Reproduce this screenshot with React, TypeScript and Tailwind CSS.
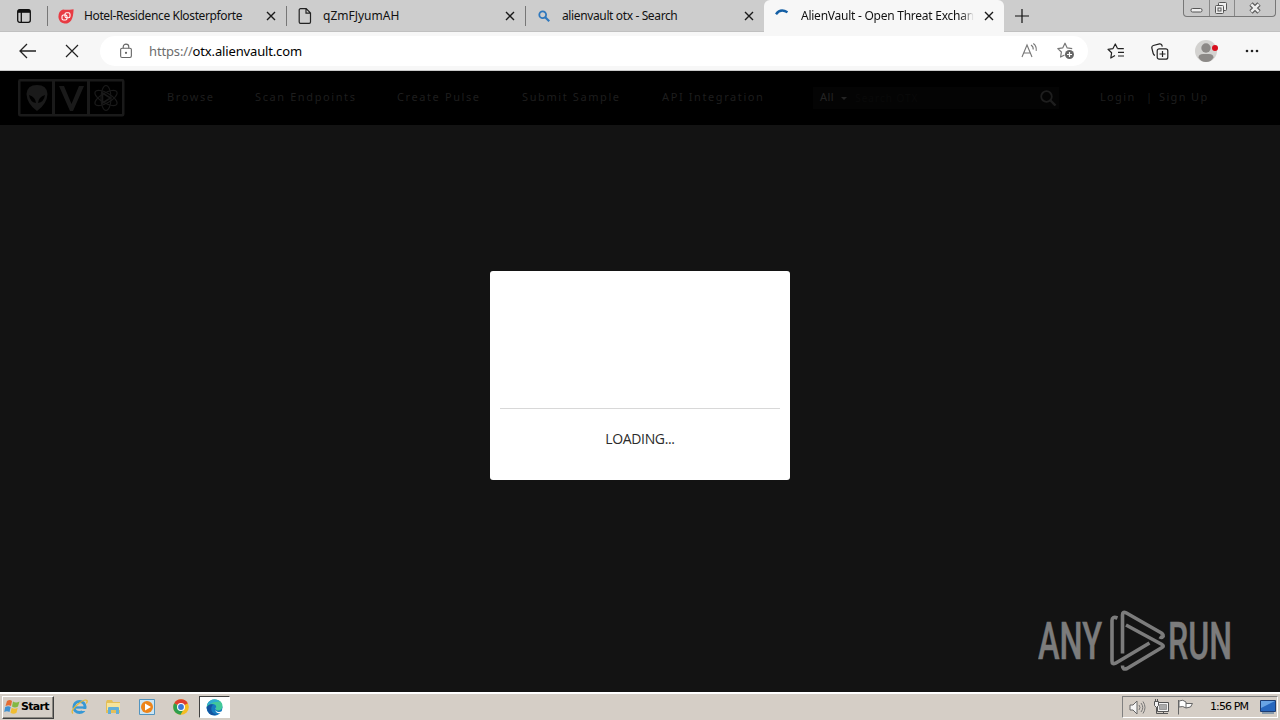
import type { ReactNode } from 'react'

const UI = "font-['Noto_Sans','Open_Sans',sans-serif]"
const CLASSIC = "font-['DejaVu_Sans',sans-serif]"

function TabClose() {
  return (
    <svg className="shrink-0" width="10" height="10" viewBox="0 0 10 10" stroke="#1a1a1a" strokeWidth="1.4">
      <path d="M1 1l8 8M9 1L1 9" />
    </svg>
  )
}

function Tab({ icon, title, className }: { icon: ReactNode; title: ReactNode; className: string }) {
  return (
    <div className={`flex h-8 shrink-0 items-center pr-[10px] pl-[10px] ${className}`}>
      <div className="flex w-4 shrink-0 justify-center">{icon}</div>
      {title}
      <TabClose />
    </div>
  )
}

function PageIcon() {
  return (
    <svg width="14" height="16" viewBox="0 0 14 16" fill="none" stroke="#222" strokeWidth="1.2">
      <path d="M2.5.7h5.700L12.500 5v9a1.300 1.300 0 0 1-1.300 1.300H2.500A1.300 1.300 0 0 1 1.200 14V2A1.300 1.300 0 0 1 2.500.7zM8 1v4.200h4.300" />
    </svg>
  )
}

function WindowButtons() {
  return (
    <div className="ml-auto mr-[4px] flex h-[17px] w-[93px] self-start rounded-b-[4px] border border-t-0 border-[#777] bg-[#c8c8c8]">
      <svg width="91" height="16" viewBox="0 0 91 16" fill="none" stroke="#555">
        <path d="M25.500 0v16M50.500 0v16" stroke="#888" />
        <rect x="7" y="8.500" width="11" height="3.500" rx="1.500" fill="#eee" />
        <rect x="34.500" y="2.500" width="8" height="8" rx="1" fill="#eee" />
        <rect x="31.500" y="5.500" width="8" height="8" rx="1" fill="#eee" />
        <rect x="34" y="8" width="3" height="3" />
        <path d="M67 4l8 8M75 4l-8 8" stroke="#555" strokeWidth="4.600" />
        <path d="M67.300 4.300l7.400 7.400M74.700 4.300l-7.400 7.400" stroke="#eee" strokeWidth="2.600" />
      </svg>
    </div>
  )
}

function TabStrip() {
  const text = `${UI} overflow-hidden whitespace-nowrap text-[12px] leading-4 text-[#111] flex-1`
  return (
    <div className="flex h-8 bg-[#cdcdcd] shadow-[inset_0_-1px_0_#c0c0c0]">
      <div className="flex w-[47px] items-center pl-[17px]">
        <svg width="14" height="14" viewBox="0 0 14 14" fill="none" stroke="#111" strokeWidth="1.300">
          <rect x=".7" y=".7" width="12.600" height="12.600" rx="2" />
          <path d="M1 2.300h12" strokeWidth="3" />
          <path d="M4.300 3v10" />
        </svg>
      </div>
      <div className="h-[20px] w-px self-center bg-[#777]" />
      <Tab
        className="w-[238px]"
        icon={
          <svg width="16" height="15" viewBox="0 0 16 15">
            <path d="M5 .6Q9 1.300 15.600.2 15.300 8 13.300 11.200 10.500 15 6.500 14.500.8 13.500.4 8 .4 2 5 .6z" fill="#e83b43" />
            <g fill="none" stroke="#fff" strokeWidth="1.100">
              <rect x="4" y="6" width="5" height="5" rx="1.500" />
              <rect x="7" y="3.800" width="5" height="5" rx="1.500" />
            </g>
          </svg>
        }
        title={<span className={`${text} ml-[10px] tracking-[-0.37px]`}>Hotel-Residence Klosterpforte</span>}
      />
      <div className="h-[20px] w-px self-center bg-[#777]" />
      <Tab className="w-[238px]" icon={<PageIcon />} title={<span className={`${text} ml-[10px] tracking-[0px]`}>qZmFJyumAH</span>} />
      <div className="h-[20px] w-px self-center bg-[#777]" />
      <Tab
        className="w-[238px]"
        icon={
          <svg width="12" height="12" viewBox="0 0 12 12" fill="none" stroke="#2f78bd" strokeWidth="1.800">
            <circle cx="4.700" cy="4.700" r="3.400" />
            <path d="M7.200 7.200l4 4" strokeWidth="2.200" />
          </svg>
        }
        title={<span className={`${text} ml-[10px] tracking-[-0.37px]`}>alienvault otx - Search</span>}
      />
      <Tab
        className="w-[240px] rounded-t-[6px] bg-[#f7f7f7]"
        icon={
          <svg width="14" height="14" viewBox="0 0 14 14" fill="none" stroke="#145fa5" strokeWidth="2.400">
            <path d="M1 5.200Q5.500-1 12.500 3.300" />
          </svg>
        }
        title={
          <span className={`${text} ml-[11px] mr-[10px] bg-linear-to-r from-[#111] from-92% to-[#f7f7f7] bg-clip-text tracking-[-0.25px] text-transparent`}>
            AlienVault - Open Threat Exchange
          </span>
        }
      />
      <div className="ml-[11px] flex items-center">
        <svg width="14" height="14" viewBox="0 0 14 14" stroke="#111" strokeWidth="1.200">
          <path d="M7 0v14M0 7h14" />
        </svg>
      </div>
      <WindowButtons />
    </div>
  )
}

function Toolbar() {
  return (
    <div className="flex h-[39px] items-center border-b border-[#c9c9c9] bg-[#f7f7f7]">
      <svg className="ml-[19px]" width="18" height="16" viewBox="0 0 18 16" fill="none" stroke="#222" strokeWidth="1.300">
        <path d="M8 1L1 8l7 7M1 8h16" />
      </svg>
      <svg className="ml-[28px]" width="14" height="14" viewBox="0 0 14 14" stroke="#222" strokeWidth="1.200">
        <path d="M1 1l12 12M13 1L1 13" />
      </svg>
      <div className="ml-[21px] flex h-[30px] w-[988px] items-center rounded-full bg-white">
        <svg className="ml-[20px]" width="12" height="16" viewBox="0 0 13 16" fill="none" stroke="#666" strokeWidth="1.200">
          <rect x=".7" y="5" width="11.600" height="10" rx="1.500" />
          <path d="M3.500 5V3.500a3 3 0 0 1 6 0V5" />
          <circle cx="6.500" cy="10" r=".6" fill="#666" />
        </svg>
        <span className={`${UI} mt-px ml-[17px] text-[13px] tracking-[-0.15px] whitespace-nowrap text-black`}>
          <span className="text-[#6d6d6d]">https://</span>otx.alienvault.com
        </span>
        <svg className="mr-[19px] ml-auto" width="17" height="16" viewBox="0 0 17 16" fill="none" stroke="#777" strokeWidth="1.100">
          <path d="M1 14L6 2l5 12M2.600 10h6.800M10 2q2.500 1.500 2.200 4.500M12.300.5q3.600 2.700 2.900 7.300" />
        </svg>
        <svg className="mr-[13px]" width="18" height="18" viewBox="0 0 18 18" fill="none" stroke="#777" strokeWidth="1.200">
          <path d="M7.500 13L3.600 15l.8-5L.8 6.600l4.900-.7L8 1.200l2.200 4.700 5 .7" strokeLinejoin="round" />
          <circle cx="12.500" cy="12.500" r="4.500" fill="#666" stroke="none" />
          <path d="M12.500 10v5M10 12.500h5" stroke="#fff" />
        </svg>
      </div>
      <svg className="ml-[19px]" width="18" height="17" viewBox="0 0 18 17" fill="none" stroke="#222" strokeWidth="1.200" strokeLinejoin="round">
        <path d="M8 12.500L3.800 15l.8-5.200L1 6.300l5-.7L8.300 1l2.200 4.600M10.500 5.600h6.300M11 9.300h6M11 13h6" />
      </svg>
      <svg className="ml-[26px]" width="18" height="17" viewBox="0 0 18 17" fill="none" stroke="#222" strokeWidth="1.200">
        <rect x="6.200" y="5.800" width="10.600" height="10.400" rx="2" />
        <path d="M11.500 8v6M8.500 11h6M4 12.300Q2.600 12 2.200 10.500L.8 5Q.6 3 2.300 2.500L8.500.8Q10.300.6 10.800 2l.5 1.600" />
      </svg>
      <svg className="ml-[26px]" width="24" height="24" viewBox="0 0 24 24">
        <circle cx="11" cy="12" r="11" fill="#d3d2d0" />
        <circle cx="11" cy="9" r="4.700" fill="#8c8987" />
        <path d="M3.500 18.500Q3.500 15 8 15h6q4.500 0 4.500 3.500Q16 23 11 23T3.500 18.500z" fill="#8c8987" />
        <circle cx="20" cy="9" r="3" fill="#d80f1d" />
      </svg>
      <svg className="ml-[26px]" width="14" height="4" viewBox="0 0 14 4" fill="#222">
        <circle cx="2" cy="2" r="1.300" />
        <circle cx="7" cy="2" r="1.300" />
        <circle cx="12" cy="2" r="1.300" />
      </svg>
    </div>
  )
}

function OtxLogo() {
  return (
    <svg className="ml-[18px] shrink-0" width="107" height="38" viewBox="0 0 107 38" fill="none" stroke="#1a1a1a">
      <rect x="1.250" y="1.250" width="104" height="35" strokeWidth="2.500" rx="1" />
      <path d="M35.500 1v36M70.500 1v36" strokeWidth="3" />
      <path
        fillRule="evenodd"
        d="M19 6Q29 6 29.500 15 29 25 19 32 9 25 8.500 15 9 6 19 6zM11 16q1 7 7 8-.5-6-7-8zM27 16q-6.500 2-7 8 6-1 7-8z"
        fill="#1a1a1a"
        stroke="none"
      />
      <path d="M41 7h5l7.500 18L61 7h5L55 32h-3z" fill="#1a1a1a" stroke="none" />
      <g strokeWidth="1.100">
        <ellipse cx="88" cy="19" rx="5" ry="12.500" />
        <ellipse cx="88" cy="19" rx="5" ry="12.500" transform="rotate(60 88 19)" />
        <ellipse cx="88" cy="19" rx="5" ry="12.500" transform="rotate(120 88 19)" />
        <path d="M84.500 14l8 5-8 5z" strokeWidth="1.600" />
      </g>
    </svg>
  )
}

function SiteHeader() {
  return (
    <header className={`${UI} flex h-[54px] items-center bg-black text-[11px] whitespace-nowrap text-[#1e1e1e]`}>
      <OtxLogo />
      <nav className="mb-[2px] ml-[42px] flex tracking-[1.6px]">
        <span className="w-[88px]">Browse</span>
        <span className="w-[142px]">Scan Endpoints</span>
        <span className="w-[125px]">Create Pulse</span>
        <span className="w-[140px]">Submit Sample</span>
        <span className="w-[151px]">API Integration</span>
      </nav>
      <div className="flex h-[22px] w-[246px] items-center bg-[#040404] pl-[7px]">
        <span className="mb-[2px] tracking-[0.5px] text-[#242424]">All</span>
        <span className="ml-[7px] border-x-[3px] border-t-[3px] border-x-transparent border-t-[#242424]" />
        <span className="ml-[8px] text-[10px] tracking-[1px] text-[#090909]">Search OTX</span>
        <svg className="mr-[2px] ml-auto" width="17" height="16" viewBox="0 0 17 16" fill="none" stroke="#1e1e1e" strokeWidth="1.800">
          <circle cx="6.500" cy="6.500" r="5.300" />
          <path d="M10.500 10.500l5 5" strokeWidth="2.400" />
        </svg>
      </div>
      <div className="mb-[2px] ml-[41px] flex tracking-[1.35px]">
        <span className="w-[46px]">Login</span>
        <span className="w-[13px]">|</span>
        <span>Sign Up</span>
      </div>
    </header>
  )
}

function AnyRun() {
  return (
    <svg className="mr-[48px] mb-[20px]" width="194" height="64" viewBox="0 0 194 64">
      <g fill="#7c7c7c" stroke="#7c7c7c" strokeWidth=".5" className="font-['Roboto',sans-serif] text-[52px] font-medium">
        <text x="0" y="51" textLength="64" lengthAdjust="spacingAndGlyphs">ANY</text>
        <text x="130" y="51" textLength="64" lengthAdjust="spacingAndGlyphs">RUN</text>
      </g>
      <g fill="none" stroke="#7c7c7c" strokeWidth="3.600" strokeLinejoin="round">
        <path d="M79.500 10Q74 8 74 12.500V53q0 4 3.500 2.200L111.500 35" />
        <path d="M84.500 45.500V7q0-4 3.500-2.200l35 20q3.500 2.500 1.500 4.200-1 1-3-.3" />
        <path d="M88 17l36 19.500q2.500 1.500 0 3L89 60.500q-4.500 2-4.500-3" />
      </g>
    </svg>
  )
}

function LoadingBox() {
  return (
    <div className="flex h-[209px] w-[300px] flex-col rounded-[3px] bg-white px-[10px]">
      <div className="h-[138px] border-b border-[#d8d8d8]" />
      <div className="mt-[20px] text-center font-['Open_Sans',sans-serif] text-[14px] leading-5 tracking-[-0.35px] text-[#2b2b2b]">LOADING...</div>
    </div>
  )
}

function QuickLaunch() {
  return (
    <div className="flex items-center">
      <svg className="ml-[17px]" width="17" height="18" viewBox="0 0 17 18" fill="none">
        <circle cx="8.500" cy="9" r="5.600" stroke="#3698d5" strokeWidth="3" />
        <path d="M4 9.500h11" stroke="#3698d5" strokeWidth="2.300" />
        <path d="M11 11h6v2h-6z" fill="#d4d0c8" />
        <path d="M2 15.500Q-1 13 6.500 6.500 14 .5 16 2.500q.6 1-.7 3" stroke="#e6b938" strokeWidth="1.300" />
      </svg>
      <svg className="ml-[17px]" width="17" height="16" viewBox="0 0 17 16">
        <path d="M1 3l1-2h5l1 2h7v11H1z" fill="#e4bf58" />
        <path d="M2 4h13v7H2z" fill="#f6e49b" />
        <path d="M3 15V9q0-1 1-1h9q1 0 1 1v6h-3v-4H6v4z" fill="#62afd8" />
      </svg>
      <svg className="ml-[17px]" width="16" height="16" viewBox="0 0 16 16">
        <path d="M.5.500h15v15H.5z" fill="#cbe5f4" stroke="#5294bf" />
        <circle cx="8" cy="8" r="6" fill="#ed8419" />
        <path d="M6 4.500l6 3.500-6 3.500z" fill="#fff" />
      </svg>
      <svg className="ml-[18px]" width="16" height="16" viewBox="0 0 16 16">
        <circle cx="8" cy="8" r="7.800" fill="#f5bd22" />
        <path d="M8 8L1.200 4.200A7.800 7.800 0 0 1 14.800 4.200z" fill="#df3e30" />
        <path d="M8 8L1.200 4.200A7.800 7.800 0 0 0 7.500 15.800L10.800 10z" fill="#2f9f4e" />
        <circle cx="8" cy="8" r="4" fill="#fff" />
        <circle cx="8" cy="8" r="2.900" fill="#3b78d6" />
      </svg>
      <div className="ml-[10px] flex h-[22px] w-[31px] items-center justify-center border border-t-[#404040] border-r-white border-b-white border-l-[#404040] bg-white">
        <svg width="17" height="17" viewBox="0 0 17 17">
          <circle cx="8.500" cy="8.500" r="8" fill="#167bc0" />
          <path d="M1 6Q4-.5 10 .6q6.500 1 6.500 7-.5 4-4.500 4-3-.3-2-2.500 1-3-2.500-4Q4 4.500 1 8z" fill="#42c99a" />
          <path d="M1 6Q3 .5 8.500.5 12 .5 14 2.800 8 2 4.500 5z" fill="#30aed0" />
          <path d="M.6 9Q2 4.500 7 5.500 3.500 10 7 14l4 2Q3 18 .6 9z" fill="#1454a0" />
          <path d="M9.500 8q-1.500 4 2.500 5 2 .4 4-.7l-1 2.200Q8 15 9.500 8z" fill="#fff" />
        </svg>
      </div>
    </div>
  )
}

function Tray() {
  return (
    <div className="ml-auto mr-[2px] flex h-[22px] w-[156px] items-center border border-t-[#808080] border-r-white border-b-white border-l-[#808080]">
      <svg className="ml-[6px]" width="17" height="15" viewBox="0 0 17 15" fill="#f5f5f5" stroke="#666">
        <path d="M1 5h3l4-4v13l-4-4H1z" />
        <path d="M10 5q2 2.500 0 5M12 3q3.500 4.500 0 9M14 1.500q4 6 0 12" fill="none" stroke="#777" />
      </svg>
      <svg className="ml-[7px]" width="17" height="16" viewBox="0 0 17 16" fill="#f4f4f4" stroke="#555">
        <path d="M4.500 3.500h11v9h-11z" />
        <path d="M6.500 5.500h7v5h-7z" fill="#aaa" stroke="#999" />
        <path d="M6 14.500h9M10.500 13v2M3.500 8v6.500H6" fill="none" />
        <path d="M1.500 2.500h4v4l-2 2-2-2zM2.500 0v2M4.500 0v2" />
      </svg>
      <svg className="ml-[7px]" width="17" height="16" viewBox="0 0 17 16" fill="#fff" stroke="#666">
        <path d="M1.500 1v14.500M2 2q4-2 7 1v6q-3-2.500-7-1zM9 4.500h6.500l-2 3.500L9 9" />
      </svg>
      <span className={`${CLASSIC} ml-[16px] w-[42px] text-[11px] tracking-[-0.9px] whitespace-nowrap`}>1:56 PM</span>
      <svg className="ml-[8px]" width="16" height="14" viewBox="0 0 16 14">
        <path d="M.5.500h15v11H.5z" fill="#2767be" stroke="#1d3c72" />
        <path d="M1 1h14L1 8z" fill="#69a4e4" />
        <path d="M2 12h12v2H2z" fill="#879aac" />
      </svg>
    </div>
  )
}

function Taskbar() {
  return (
    <div className="flex h-[28px] items-center border-t-2 border-white bg-[#d5cec6]">
      <div className={`${CLASSIC} ml-[2px] flex h-[23px] w-[52px] items-center border border-t-white border-r-[#404040] border-b-[#404040] border-l-white text-[11px] font-bold tracking-[-0.7px] text-black shadow-[inset_-1px_-1px_0_#8a8780]`}>
        <svg className="mr-px ml-px shrink-0" width="16" height="16" viewBox="0 0 16 16">
          <path d="M3 2q3-2 5 0L7 7Q5 5.500 1.500 7z" fill="#e46c32" />
          <path d="M9 2.500q3 2 6.500 0L14 7.500q-3 2-6 0z" fill="#83b842" />
          <path d="M1.200 8q3-1.500 5.500 0l-1.200 5q-2.500-1.500-5.300 0z" fill="#4091d1" />
          <path d="M7.700 8.700q3 2 6 0l-1.200 5q-3 2-6 0z" fill="#f1bd32" />
        </svg>
        Start
      </div>
      <QuickLaunch />
      <Tray />
    </div>
  )
}

export default function App() {
  return (
    <div className="flex h-[720px] w-[1280px] flex-col overflow-hidden bg-[#131313]">
      <TabStrip />
      <Toolbar />
      <SiteHeader />
      <main className="flex flex-1 flex-col items-center justify-between pt-[146px]">
        <LoadingBox />
        <div className="self-end">
          <AnyRun />
        </div>
      </main>
      <Taskbar />
    </div>
  )
}
